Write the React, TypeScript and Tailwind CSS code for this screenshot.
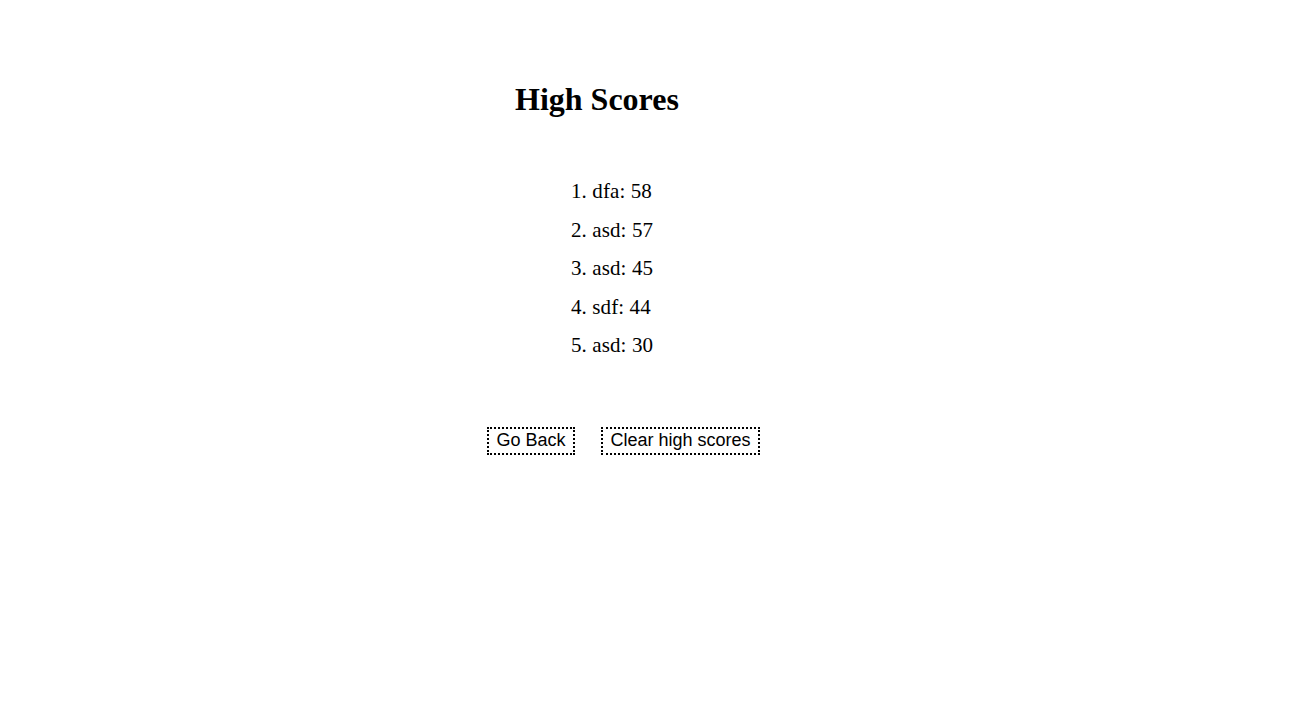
const scores = [
  { name: 'dfa', score: 58 },
  { name: 'asd', score: 57 },
  { name: 'asd', score: 45 },
  { name: 'sdf', score: 44 },
  { name: 'asd', score: 30 },
];

export default function App() {
  return (
    <div className="min-h-screen bg-white text-black font-['Liberation_Serif',serif]">
      <div className="pt-[81px] pl-[487px] flex flex-col items-start">
        <h1 className="ml-[28px] text-[32px] leading-[37px] font-bold">High Scores</h1>

        <ol className="ml-[84px] mt-[54px] text-[21px] tracking-[0.1px]">
          {scores.map((s, i) => (
            <li key={i} className="h-[38.5px] leading-[38.5px] whitespace-nowrap">
              {i + 1}. {s.name}: {s.score}
            </li>
          ))}
        </ol>

        <div className="mt-[62px] flex gap-[26px] font-['Liberation_Sans',sans-serif] text-[18px]">
          <button className="border-2 border-dotted border-black px-[7.5px] pt-[1px] pb-[3px] leading-[20px] bg-white">
            Go Back
          </button>
          <button className="border-2 border-dotted border-black px-[7.5px] pt-[1px] pb-[3px] leading-[20px] bg-white">
            Clear high scores
          </button>
        </div>
      </div>
    </div>
  );
}
